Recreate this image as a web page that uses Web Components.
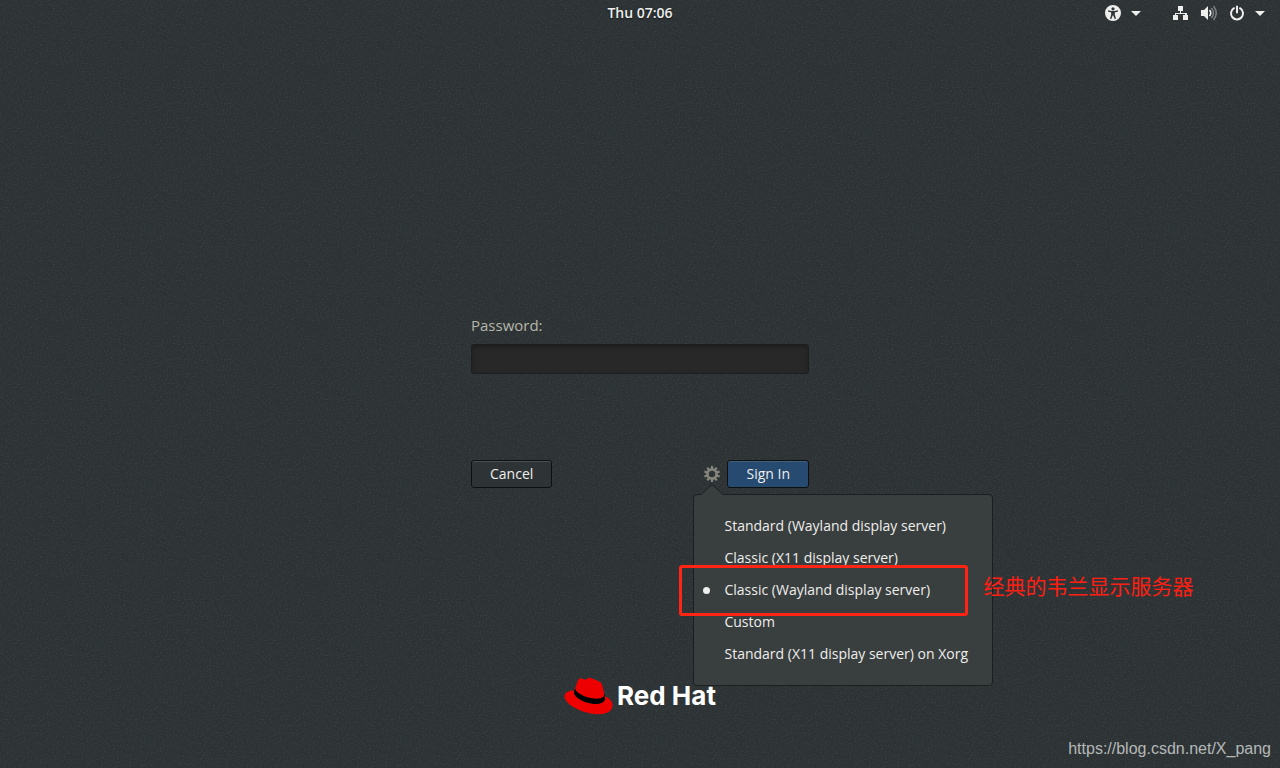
<!DOCTYPE html>
<html lang="en">
<head>
<meta charset="utf-8">
<meta name="viewport" content="width=device-width, initial-scale=1">
<title>Sign in</title>
<style>
  html,body{height:100%}
  body{margin:0;background:#2d3335;color:#eeeeec;font-family:'Open Sans','Noto Sans',sans-serif;font-size:14px;line-height:20px}
</style>
</head>
<body>
<login-screen>
  <top-bar slot="bar" time="Thu 07:06"></top-bar>
  <login-form>
    <session-menu slot="session">
      <session-option>Standard (Wayland display server)</session-option>
      <session-option>Classic (X11 display server)</session-option>
      <session-option selected note="经典的韦兰显示服务器">Classic (Wayland display server)</session-option>
      <session-option>Custom</session-option>
      <session-option>Standard (X11 display server) on Xorg</session-option>
    </session-menu>
  </login-form>
  <brand-logo slot="logo">Red Hat</brand-logo>
  <a slot="link" href="https://blog.csdn.net/X_pang">https://blog.csdn.net/X_pang</a>
</login-screen>

<script>
(function () {
  class LoginScreen extends HTMLElement {
    connectedCallback() {
      const s = this.attachShadow({ mode: 'open' });
      s.innerHTML = `
        <style>
          *{box-sizing:border-box}
          :host{position:relative;display:flex;flex-direction:column;min-height:100%;
            background:#2d3335 url("data:image/svg+xml,%3Csvg xmlns='http://www.w3.org/2000/svg' width='256' height='256'%3E%3Cfilter id='n' x='0' y='0' width='100%25' height='100%25'%3E%3CfeTurbulence type='fractalNoise' baseFrequency='.7' numOctaves='2' stitchTiles='stitch'/%3E%3CfeColorMatrix values='0 0 0 0 .6 0 0 0 0 .7 0 0 0 0 .7 .24 0 0 0 -.12'/%3E%3C/filter%3E%3Crect width='256' height='256' filter='url(%23n)'/%3E%3C/svg%3E")}
          main{flex:1;display:flex;align-items:center;justify-content:center;padding-top:100px}
          footer{display:flex;justify-content:center;padding-bottom:53px}
          ::slotted(a){position:absolute;right:9px;bottom:8px;color:#b5b8b9;font-family:'Liberation Sans',sans-serif;font-size:16px;line-height:22px;text-decoration:none}
        </style>
        <slot name="bar"></slot>
        <main><slot></slot></main>
        <footer><slot name="logo"></slot></footer>
        <slot name="link"></slot>`;
    }
  }

  class TopBar extends HTMLElement {
    connectedCallback() {
      const s = this.attachShadow({ mode: 'open' });
      s.innerHTML = `
        <style>
          *{box-sizing:border-box}
          :host{display:block;color:#eeeeec}
          header{display:grid;grid-template-columns:1fr auto 1fr;align-items:center;height:26px;padding:0 15px}
          time{grid-column:2;font-size:14px;font-weight:600;text-shadow:0 1px 2px rgba(0,0,0,.6)}
          nav{display:flex;justify-content:flex-end;gap:32px}
          button{display:flex;align-items:center;gap:12px;padding:0;border:0;background:none;color:inherit}
          svg{display:block;fill:currentColor}
          .caret{width:10px;height:5px}
          .group{gap:12px}
          .group .caret{margin-left:-2px}
          .a11y{gap:10px}
        </style>
        <header>
          <time>${this.getAttribute('time')}</time>
          <nav>
            <button class="a11y" type="button" aria-label="Accessibility">
              <svg width="16" height="16" viewBox="0 0 16 16"><path fill-rule="evenodd" d="M8 0a8 8 0 1 0 0 16A8 8 0 0 0 8 0zm0 2.2a1.6 1.6 0 1 1 0 3.2 1.6 1.6 0 0 1 0-3.2zM3 5.2l3.6.8h2.8l3.6-.8v1.3l-3.2 1v2l1.2 4.2-1.3.4L8.3 10.5h-.6l-1.4 3.6-1.3-.4 1.2-4.2v-2L3 6.5z"/></svg>
              <svg class="caret" viewBox="0 0 10 5"><path d="M0 0h10L5 5z"/></svg>
            </button>
            <button class="group" type="button" aria-label="System menu">
              <svg width="16" height="16" viewBox="0 0 16 16"><path d="M5 1h5v5H8v2h6v2h1v5h-5v-5h2V9H3v1h2v5H0v-5h2V8h5V6H5z"/></svg>
              <svg width="16" height="16" viewBox="0 0 16 16"><path d="M0 5h3l4-4v14l-4-4H0z"/><path d="M8.5 5q2.5 3 0 6" fill="none" stroke="currentColor" stroke-width="1.6"/><path d="M10.5 3q4 5 0 10M12.5 1q5.5 7 0 14" fill="none" stroke="currentColor" stroke-width="1.5" opacity=".4"/></svg>
              <svg width="16" height="16" viewBox="0 0 16 16"><path d="M5 3.2A6 6 0 1 0 11 3.2M8 1.5v6" fill="none" stroke="currentColor" stroke-width="2" stroke-linecap="round"/></svg>
              <svg class="caret" viewBox="0 0 10 5"><path d="M0 0h10L5 5z"/></svg>
            </button>
          </nav>
        </header>`;
    }
  }

  class LoginForm extends HTMLElement {
    connectedCallback() {
      const s = this.attachShadow({ mode: 'open' });
      s.innerHTML = `
        <style>
          *{box-sizing:border-box}
          :host{display:block;width:338px;max-width:100%}
          form{display:flex;flex-direction:column}
          label{margin-bottom:9px;color:#b6b6aa;font-size:15px}
          input{height:30px;padding:0 8px;border:1px solid #1c1f1f;border-radius:3px;background:#282828;box-shadow:inset 0 2px 4px rgba(0,0,0,.3);color:#eeeeec;font:inherit;outline:0}
          .row{display:flex;align-items:center;justify-content:space-between;margin-top:86px}
          .end{display:flex;align-items:center;gap:7px}
          button{height:28px;padding:0 18px;border:1px solid #0d1011;border-radius:3px;background:#2e3436;box-shadow:inset 0 1px #4b5051;color:#eeeeec;font:inherit}
          .primary{background:#264a70;box-shadow:inset 0 1px #465f78}
        </style>
        <form onsubmit="return false">
          <label for="pw">Password:</label>
          <input id="pw" type="password">
          <div class="row">
            <button type="button">Cancel</button>
            <div class="end">
              <slot name="session"></slot>
              <button class="primary" type="submit">Sign In</button>
            </div>
          </div>
        </form>`;
    }
  }

  class SessionMenu extends HTMLElement {
    connectedCallback() {
      const s = this.attachShadow({ mode: 'open' });
      // ring with rotated teeth makes the cog
      const teeth = [...Array(10)].map((_, i) => `<path d="M6.9 0h2.2v3.500H6.9z" transform="rotate(${i * 36} 8 8)"/>`).join('');
      s.innerHTML = `
        <style>
          *{box-sizing:border-box}
          :host{position:relative;display:block}
          button{display:block;padding:0;border:0;background:none;color:#85857b}
          svg{display:block}
          .menu{position:absolute;z-index:2;top:28px;left:-11px;min-width:300px;padding:15px 0;border:1px solid #1b1f20;border-radius:4px;background:#393e3e}
          .arrow{position:absolute;top:-11px;left:6px}
        </style>
        <button type="button" aria-label="Session" aria-expanded="true">
          <svg width="16" height="16" viewBox="0 0 16 16" fill="currentColor">${teeth}<circle cx="8" cy="8" r="4.6" fill="none" stroke="currentColor" stroke-width="2.6"/></svg>
        </button>
        <div class="menu" role="radiogroup" aria-label="Session">
          <svg class="arrow" width="24" height="12" viewBox="0 0 24 12"><path d="M0 12v-1L12 .5l12 10.5v1z" fill="#393e3e"/><path d="M0 10.500h1L12 .5l11 10h1" fill="none" stroke="#1b1f20"/></svg>
          <slot></slot>
        </div>`;
      s.querySelector('.menu').addEventListener('change', e => {
        this.querySelectorAll('session-option').forEach(o => { o.radio.checked = o === e.target; });
      });
    }
  }

  class SessionOption extends HTMLElement {
    get radio() { return this.shadowRoot.querySelector('input'); }
    connectedCallback() {
      const s = this.attachShadow({ mode: 'open' });
      const note = this.getAttribute('note');
      s.innerHTML = `
        <style>
          *{box-sizing:border-box}
          :host{position:relative;display:block}
          label{display:flex;align-items:center;height:32px;padding:0 22px 0 9px;white-space:nowrap}
          input{appearance:none;width:7px;height:7px;margin:0 14px 0 0;border-radius:50%}
          input:checked{background:#eeeeec}
          .frame{position:absolute;inset:-9px 24px -10px -15px;border:3px solid #ff2414;border-radius:3px;pointer-events:none}
          .note{position:absolute;top:-5px;left:calc(100% - 9px);color:#ff1e12;font-family:'Noto Sans CJK SC',sans-serif;font-size:21px;line-height:32px;white-space:nowrap}
        </style>
        <label><input type="radio" ${this.hasAttribute('selected') ? 'checked' : ''}><span><slot></slot></span></label>
        ${note ? `<div class="frame"></div><span class="note" lang="zh">${note}</span>` : ''}`;
      // native change events stop at the shadow boundary
      this.radio.addEventListener('change', () => this.dispatchEvent(new Event('change', { bubbles: true, composed: true })));
    }
  }

  class BrandLogo extends HTMLElement {
    connectedCallback() {
      const s = this.attachShadow({ mode: 'open' });
      s.innerHTML = `
        <style>
          :host{display:flex;align-items:center;gap:4px;color:#fff;font-family:Inter,sans-serif;font-size:26px;font-weight:700;line-height:38px}
          svg{display:block}
        </style>
        <svg width="49" height="38" viewBox="0 2.5 24 19" aria-hidden="true">
          <path d="M20.11 11.951c.218 1.032.218 1.14.218 1.277 0 1.765-1.984 2.745-4.593 2.745-5.895.004-11.06-3.451-11.06-5.734a2.326 2.326 0 0 1 .19-.925l.46-1.128L19.83 10.75z" fill="#000"/>
          <path d="M16.009 13.386c1.577 0 3.86-.326 3.86-2.202a1.765 1.765 0 0 0-.04-.431l-.94-4.08c-.216-.898-.406-1.305-1.982-2.093-1.223-.625-3.888-1.658-4.676-1.658-.733 0-.947.946-1.822.946-.842 0-1.467-.706-2.255-.706-.757 0-1.25.515-1.63 1.576 0 0-1.06 2.99-1.197 3.424a.81.81 0 0 0-.028.245c0 1.162 4.577 4.974 10.71 4.974m4.101-1.435c.218 1.032.218 1.14.218 1.277 0 1.765-1.984 2.745-4.593 2.745-5.895.004-11.06-3.451-11.06-5.734a2.326 2.326 0 0 1 .19-.925C2.746 9.415 0 9.794 0 12.217c0 3.969 9.405 8.861 16.851 8.861 5.71 0 7.149-2.582 7.149-4.62 0-1.605-1.387-3.425-3.887-4.512" fill="#e00"/>
        </svg>
        <span><slot></slot></span>`;
    }
  }

  customElements.define('login-screen', LoginScreen);
  customElements.define('top-bar', TopBar);
  customElements.define('login-form', LoginForm);
  customElements.define('session-menu', SessionMenu);
  customElements.define('session-option', SessionOption);
  customElements.define('brand-logo', BrandLogo);
})();
</script>
</body>
</html>
